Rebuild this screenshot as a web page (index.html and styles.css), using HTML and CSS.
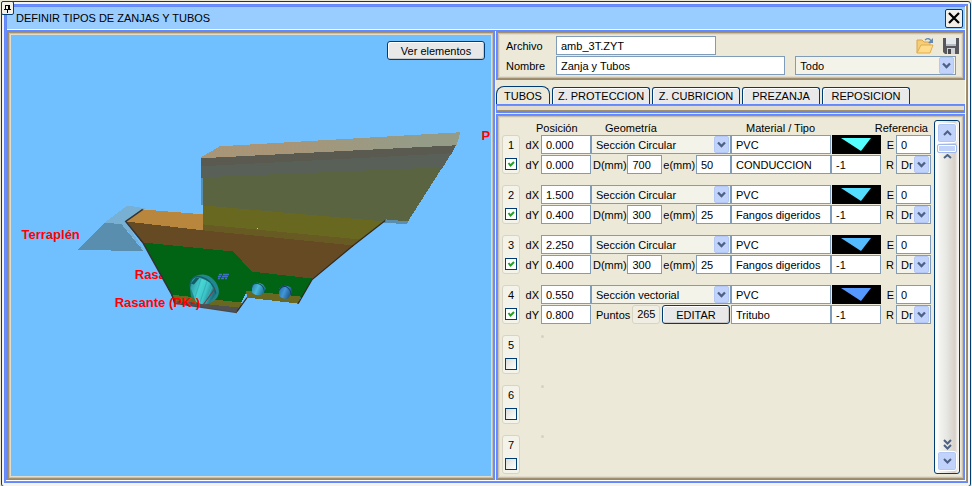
FILE: index.html
```
<!DOCTYPE html>
<html lang="es">
<head>
<meta charset="utf-8">
<title>Definir tipos de zanjas y tubos</title>
<link rel="stylesheet" href="styles.css">
</head>
<body>
<main class="window">
  <button class="pin" type="button" aria-label="Fijar">
    <svg viewBox="0 0 9 11" width="9" height="11" shape-rendering="crispEdges"><path d="M2 2h5v1H2zM2 2h1v4H2zM5 2h2v4H5zM1 6h7v1H1zM4 7h1v3H4z" fill="#000"/></svg>
  </button>
  <div class="frame">
    <header class="titlebar">
      <h1>DEFINIR TIPOS DE ZANJAS Y TUBOS</h1>
      <button class="close" type="button" aria-label="Cerrar">
        <svg viewBox="0 0 12 12" width="12" height="12"><path d="M1 1l10 10M11 1L1 11" stroke="#000" stroke-width="2.2"/></svg>
      </button>
    </header>
    <div class="body">
      <section class="panel viewer">
        <svg class="scene" viewBox="11 35 480 440" preserveAspectRatio="xMidYMid slice" role="img" aria-label="Vista de la zanja">
          <defs>
            <pattern id="weave" width="4" height="3" patternUnits="userSpaceOnUse"><rect width="4" height="3" fill="#a0977e"/><path d="M0 0h1v1H0zM1 1h1v1H1zM2 2h1v1H2z" fill="#bb9268"/></pattern>
            <linearGradient id="fade"><stop offset=".3" stop-color="#949c88" stop-opacity="0"/><stop offset=".85" stop-color="#949c88"/></linearGradient>
            <linearGradient id="pipe" x1="0" y1="0" x2="1" y2=".4"><stop offset="0" stop-color="#238b94"/><stop offset=".45" stop-color="#48d4d4"/><stop offset=".7" stop-color="#3cc4c8"/><stop offset="1" stop-color="#1d7480"/></linearGradient>
            <linearGradient id="pipe2" x1="0" y1="0" x2="1" y2=".4"><stop offset="0" stop-color="#267f9c"/><stop offset=".5" stop-color="#48b8dc"/><stop offset="1" stop-color="#1f6f90"/></linearGradient>
            <linearGradient id="pipe3" x1="0" y1="0" x2="1" y2=".4"><stop offset="0" stop-color="#24689c"/><stop offset=".5" stop-color="#4296d8"/><stop offset="1" stop-color="#1d5688"/></linearGradient>
          </defs>
          <g class="label"><text x="22" y="239">Terraplén</text><text x="135" y="278">Rasante</text><text x="481" y="140">P</text></g>
          <g shape-rendering="crispEdges">
            <path d="M105 222L128 205L145 208L126 221L144 250L122 224Z" fill="#78b0d4"/>
            <path d="M105 222L122 224L144 251L78 249Z" fill="#5a8eae"/>
            <path d="M143 209L204 214L204 232L126 221Z" fill="#b8863c"/>
            <path d="M201 158H204V205H201Z" fill="#5a8eae"/>
            <path d="M201 157L456 144L451 154L201 167Z" fill="#5a5a50"/>
            <path d="M201 157L220 146L460 132L456 145L201 158Z" fill="url(#weave)"/>
            <path d="M201 157L220 146L460 132L456 145L201 158Z" fill="url(#fade)"/>
            <path d="M201 166L451 153L442 168L203 178L201 177Z" fill="#586058"/>
            <path d="M203 177L442 167L407 222L383 222L203 206Z" fill="#5a6440"/>
            <path d="M386 219L408 221L406 224L383 222Z" fill="#5a8eae"/>
            <path d="M203 205L384 221L360 240L203 225Z" fill="#686820"/>
            <path d="M203 224L360 239L352 247L203 231Z" fill="#675a22"/>
            <path d="M126 221L204 230L353 245L312 279L252 273L233 253L143 243Z" fill="#664a24"/>
            <path d="M143 242L233 251L252 271L312 278L302 297L246 292L241 303L172 295Z" fill="#006414"/>
            <path d="M246 290L301 296L298 303L247 297ZM171 294L242 302L239 308L174 301Z" fill="#686820"/>
            <path d="M174 300L239 307L237 312L175 303Z" fill="#505050"/>
            <rect x="257" y="228" width="1" height="1" fill="#ffc040"/>
          </g>
          <path d="M143 209L126 221L143 242L172 294L175 303" fill="none" stroke="#333" stroke-width="1.5"/>
          <path d="M385 220L353 245L312 279L298 303M247 297L237 311" fill="none" stroke="#302a20" stroke-width="1.2"/>
          <path d="M175 303L237 312" fill="none" stroke="#484848"/>
          <path d="M190 286C190 278 195 274 203 274C211 274 219 283 219 291C219 299 211 304 203 303L191 296Z" fill="#208890"/>
          <path d="M192 279L196 276L212 282L216 294L209 303Q202 305 196 301L191 288Z" fill="url(#pipe)"/>
          <path d="M201 278L195 297M207 281L200 302M212 286L206 302" stroke="#35b0b6" fill="none"/>
          <path d="M190 286C190 278 195 275 200 276Q213 279 216 293" fill="none" stroke="#13606a" stroke-width="1.3"/>
          <path d="M191 283L196 277L200 277L194 284Z" fill="#145c64"/>
          <path d="M215 288L202 306" stroke="#704050"/>
          <path d="M252 285Q256 280 263 284L266 288L262 294Q256 296 252 292Z" fill="url(#pipe2)"/>
          <path d="M252 287Q252 282 258 283Q264 285 264 290" fill="none" stroke="#174f64"/>
          <path d="M279 288Q284 283 291 287L292 292L288 298Q282 299 279 295Z" fill="url(#pipe3)"/>
          <path d="M279 290Q281 285 286 286Q291 289 291 294" fill="none" stroke="#173d68"/>
          <path d="M219 274h3M223 274h3M226 274h3M218 276h3M222 276h3M225 276h3M218 278h2M221 278h3M225 278h2" stroke="#4272c8" stroke-width="1.5"/>
          <g class="label"><text x="115" y="306">Rasante (PK-)</text></g>
        </svg>
        <button class="btn see" type="button">Ver elementos</button>
      </section>
      <div class="side">
        <section class="panel file">
          <div class="file-row">
            <label for="archivo">Archivo</label>
            <input id="archivo" class="archivo" value="amb_3T.ZYT">
            <div class="tools">
              <button class="tool" type="button" aria-label="Abrir"><svg viewBox="0 0 18 18" width="18" height="18"><path d="M1 16V3h5l2 2h6v4" fill="#f5cd78" stroke="#d9a549"/><path d="M1 16L5 8h12l-3 8z" fill="#ffdc8c" stroke="#e0ac50"/><path d="M9 3q4-3 6 1" fill="none" stroke="#6488b0" stroke-width="1.3"/><path d="M17 1v5h-5z" fill="#6488b0"/></svg></button>
              <button class="tool" type="button" aria-label="Guardar"><svg viewBox="0 0 18 18" width="18" height="18"><path d="M1 1h16v16H3l-2-2z" fill="#58585c"/><path d="M4 1h10v8H4z" fill="#e4e8ea"/><path d="M4 7h10v2H4z" fill="#b8bcc0"/><path d="M5 11h8v6H5z" fill="#d0d4d6"/><path d="M6 12h3v5H6z" fill="#48484c"/></svg></button>
            </div>
          </div>
          <div class="file-row">
            <label for="nombre">Nombre</label>
            <input id="nombre" class="nombre" value="Zanja y Tubos">
            <select class="todo" aria-label="Filtro"><option>Todo</option></select>
          </div>
        </section>
        <nav class="tabs">
          <button class="tab active" type="button">TUBOS</button>
          <button class="tab wide" type="button">Z. PROTECCION</button>
          <button class="tab mid" type="button">Z. CUBRICION</button>
          <button class="tab" type="button">PREZANJA</button>
          <button class="tab mid" type="button">REPOSICION</button>
        </nav>
        <div class="strip"></div>
        <section class="panel tubes">
          <div class="list">
            <div class="row head"><span class="h-pos">Posición</span><span class="h-geo">Geometría</span><span class="h-mat">Material / Tipo</span><span class="h-ref">Referencia</span></div>

            <div class="row">
              <div class="num"><label for="t1">1</label><input id="t1" type="checkbox" checked></div>
              <label class="axis" for="x1">dX</label><input id="x1" class="px" value="0.000">
              <select class="sec" aria-label="Sección 1"><option>Sección Circular</option></select>
              <input class="mat" aria-label="Material 1" value="PVC">
              <button class="color" type="button" aria-label="Color 1"><svg viewBox="0 0 49 19"><path d="M9 3H39L29 16Z" fill="#55ffff"/></svg></button>
              <label class="ref" for="e1">E</label><input id="e1" class="re" value="0">
              <label class="axis" for="y1">dY</label><input id="y1" class="px" value="0.000">
              <div class="geo"><label for="d1">D(mm)</label><input id="d1" value="700"><label for="w1">e(mm)</label><input id="w1" value="50"></div>
              <input class="mat" aria-label="Tipo 1" value="CONDUCCION"><input class="id" aria-label="Índice 1" value="-1">
              <label class="ref" for="r1">R</label><select id="r1" class="re"><option>Dr</option></select>
            </div>

            <div class="row">
              <div class="num"><label for="t2">2</label><input id="t2" type="checkbox" checked></div>
              <label class="axis" for="x2">dX</label><input id="x2" class="px" value="1.500">
              <select class="sec" aria-label="Sección 2"><option>Sección Circular</option></select>
              <input class="mat" aria-label="Material 2" value="PVC">
              <button class="color" type="button" aria-label="Color 2"><svg viewBox="0 0 49 19"><path d="M9 3H39L29 16Z" fill="#55ddff"/></svg></button>
              <label class="ref" for="e2">E</label><input id="e2" class="re" value="0">
              <label class="axis" for="y2">dY</label><input id="y2" class="px" value="0.400">
              <div class="geo"><label for="d2">D(mm)</label><input id="d2" value="300"><label for="w2">e(mm)</label><input id="w2" value="25"></div>
              <input class="mat" aria-label="Tipo 2" value="Fangos digeridos"><input class="id" aria-label="Índice 2" value="-1">
              <label class="ref" for="r2">R</label><select id="r2" class="re"><option>Dr</option></select>
            </div>

            <div class="row">
              <div class="num"><label for="t3">3</label><input id="t3" type="checkbox" checked></div>
              <label class="axis" for="x3">dX</label><input id="x3" class="px" value="2.250">
              <select class="sec" aria-label="Sección 3"><option>Sección Circular</option></select>
              <input class="mat" aria-label="Material 3" value="PVC">
              <button class="color" type="button" aria-label="Color 3"><svg viewBox="0 0 49 19"><path d="M9 3H39L29 16Z" fill="#55bbff"/></svg></button>
              <label class="ref" for="e3">E</label><input id="e3" class="re" value="0">
              <label class="axis" for="y3">dY</label><input id="y3" class="px" value="0.400">
              <div class="geo"><label for="d3">D(mm)</label><input id="d3" value="300"><label for="w3">e(mm)</label><input id="w3" value="25"></div>
              <input class="mat" aria-label="Tipo 3" value="Fangos digeridos"><input class="id" aria-label="Índice 3" value="-1">
              <label class="ref" for="r3">R</label><select id="r3" class="re"><option>Dr</option></select>
            </div>

            <div class="row">
              <div class="num"><label for="t4">4</label><input id="t4" type="checkbox" checked></div>
              <label class="axis" for="x4">dX</label><input id="x4" class="px" value="0.550">
              <select class="sec" aria-label="Sección 4"><option>Sección vectorial</option></select>
              <input class="mat" aria-label="Material 4" value="PVC">
              <button class="color" type="button" aria-label="Color 4"><svg viewBox="0 0 49 19"><path d="M9 3H39L29 16Z" fill="#5599ff"/></svg></button>
              <label class="ref" for="e4">E</label><input id="e4" class="re" value="0">
              <label class="axis" for="y4">dY</label><input id="y4" class="px" value="0.800">
              <div class="geo vector"><span>Puntos</span><output>265</output><button class="btn" type="button">EDITAR</button></div>
              <input class="mat" aria-label="Tipo 4" value="Tritubo"><input class="id" aria-label="Índice 4" value="-1">
              <label class="ref" for="r4">R</label><select id="r4" class="re"><option>Dr</option></select>
            </div>

            <div class="row"><div class="num"><label for="t5">5</label><input id="t5" type="checkbox"></div><i class="dot"></i></div>
            <div class="row"><div class="num"><label for="t6">6</label><input id="t6" type="checkbox"></div><i class="dot"></i></div>
            <div class="row"><div class="num"><label for="t7">7</label><input id="t7" type="checkbox"></div><i class="dot"></i></div>
          </div>
          <div class="scroll">
            <button class="arrow" type="button" aria-label="Subir"><svg viewBox="0 0 9 6" width="9" height="6"><path d="M1 5l3.500-3.500L8 5" class="chev"/></svg></button>
            <div class="thumb"></div>
            <svg viewBox="0 0 9 5" width="9" height="5"><path d="M1 4l3.500-3L8 4" class="chev"/></svg>
            <svg class="end" viewBox="0 0 9 11" width="9" height="11"><path d="M1 1l3.500 3.500L8 1M1 6l3.500 3.500L8 6" class="chev"/></svg>
            <button class="arrow" type="button" aria-label="Bajar"><svg viewBox="0 0 9 6" width="9" height="6"><path d="M1 1l3.500 3.500L8 1" class="chev"/></svg></button>
          </div>
        </section>
      </div>
    </div>
  </div>
</main>
</body>
</html>
```
FILE: styles.css
```
* { box-sizing: border-box; }

:root {
  --navy: #003c74;
  --blue: #6488f8;
  --brown: #a09070;
  --face: #ece9d8;
  --field: #7f9db9;
  --light: #f4f3ea;
}

body {
  margin: 0;
  padding: 1px 1px 0;
  background: var(--face);
  color: #000;
  font: 11px/14px "Liberation Sans", Arial, sans-serif;
}

button, input, select {
  font: inherit;
  color: inherit;
  margin: 0;
  padding: 0;
  min-width: 0;
  border-radius: 0;
}

.window {
  position: relative;
  display: flex;
  min-height: calc(100vh - 1px);
  padding: 2px 2px 3px;
  border: 1px solid var(--navy);
  border-radius: 3px;
  background: #f6f4ec;
}

.pin {
  position: absolute;
  left: -1px;
  top: -1px;
  width: 13px;
  height: 14px;
  border: 1px solid var(--navy);
  border-radius: 2px;
  background: #f3f1e8;
  display: grid;
  place-items: center;
}

.frame {
  flex: 1;
  display: flex;
  flex-direction: column;
  padding: 3px;
  background: var(--face);
  box-shadow: inset 0 0 0 1px var(--blue), inset 0 0 0 2px var(--brown), inset -3px -3px #fff, inset 3px 3px var(--blue);
}

.titlebar {
  display: flex;
  align-items: center;
  justify-content: space-between;
  height: 23px;
  padding: 0 2px 0 9px;
  border-bottom: 1px solid #fff;
  background: #99ccff;
}

h1 {
  margin: 0;
  font-size: 11px;
  font-weight: normal;
}

.close {
  width: 18px;
  height: 19px;
  border: 1px solid var(--navy);
  border-radius: 2px;
  background: #f2f0e8;
  display: grid;
  place-items: center;
}

.body {
  flex: 1;
  display: grid;
  grid-template-columns: minmax(0, 488fr) minmax(0, 469fr);
  gap: 1px;
  padding-top: 1px;
  background: linear-gradient(var(--blue) 1px, #f6f4ec 1px);
}

.panel {
  padding: 4px;
  background: var(--face);
  box-shadow: inset 0 0 0 1px var(--blue), inset 0 0 0 2px var(--brown), inset 0 0 0 3px #c8c0ac, inset 0 0 0 4px #e2dccd;
}

.viewer {
  position: relative;
  display: flex;
}

.scene {
  flex: 1;
  width: 100%;
  min-height: 300px;
  height: 100%;
  background: #70c0ff;
}

.label {
  font: bold 13px "Liberation Sans", Arial, sans-serif;
  fill: #f00;
}

.btn {
  border: 1px solid var(--navy);
  border-radius: 3px;
  background: #e8e8e8;
  box-shadow: inset 1px 1px #fff, inset -1px -1px #c8c8c8;
}

.see {
  position: absolute;
  top: 10px;
  right: 10px;
  width: 98px;
  height: 19px;
}

.side {
  display: flex;
  flex-direction: column;
  background: var(--face);
}

.file {
  display: grid;
  gap: 1px;
  padding: 5px 9px 5px 10px;
}

.file-row {
  display: flex;
  align-items: center;
  height: 19px;
}

.file-row label { width: 50px; }

input, select, output {
  height: 19px;
  border: 1px solid var(--field);
  background: #fff;
  padding: 0 4px;
}

.archivo { flex: 0 1 160px; }
.nombre { flex: 230 1 0; margin-right: 10px; }
.todo { flex: 158 1 0; }

.tools {
  display: flex;
  gap: 8px;
  margin-left: auto;
  margin-right: -4px;
}

.tool {
  width: 18px;
  height: 18px;
  border: 0;
  background: none;
}

.tool svg { display: block; }

select {
  appearance: none;
  background: url("data:image/svg+xml,%3Csvg xmlns='http://www.w3.org/2000/svg' width='15' height='17'%3E%3Crect x='.5' y='.5' width='14' height='16' rx='1.500' fill='%23c1d3fb' stroke='%23b4c8f6'/%3E%3Cpath d='M4 6.500l3.500 3.500L11 6.500' fill='none' stroke='%234d6185' stroke-width='2.300'/%3E%3C/svg%3E") right 1px center no-repeat var(--light);
}

.tabs {
  display: flex;
  align-items: flex-end;
  gap: 2px;
  height: 24px;
}

.tab {
  width: 78px;
  height: 17px;
  border: 1px solid var(--navy);
  border-bottom: 0;
  border-radius: 3px 3px 0 0;
  background: #e9e9e9;
  box-shadow: inset 1px 1px #fff;
}

.tab.wide { width: 98px; }
.tab.mid { width: 88px; }

.tab.active {
  width: 54px;
  height: 18px;
  border-radius: 8px 8px 0 0;
  background: var(--face);
  box-shadow: none;
}

.strip {
  height: 9px;
  margin-bottom: 1px;
  border: solid var(--blue);
  border-width: 1px 1px 2px;
  background: linear-gradient(var(--brown) 1px, #e2dccd 1px 5px, var(--brown) 5px);
}

.tubes {
  flex: 1;
  display: flex;
  padding: 6px 5px 6px 6px;
}

.list {
  flex: 1;
  display: grid;
  align-content: start;
  row-gap: 11px;
}

.row {
  display: grid;
  grid-template-columns: 18px 21px minmax(0, 50fr) minmax(0, 140fr) minmax(0, 100fr) minmax(0, 50fr) 15px minmax(0, 35fr);
  grid-template-rows: 19px 19px;
  row-gap: 1px;
  align-items: center;
  padding-right: 3px;
}

.list .head {
  grid-template-rows: 15px;
  margin-bottom: -11px;
}

.h-pos { grid-column: 2 / 4; padding-left: 16px; }
.h-geo { padding-left: 14px; }
.h-mat { padding-left: 15px; }
.h-ref { grid-column: 6 / 9; justify-self: end; padding-right: 3px; }

.num {
  grid-row: 1 / 3;
  align-self: stretch;
  display: flex;
  flex-direction: column;
  align-items: center;
  justify-content: space-between;
  padding: 2px 0 3px;
  border: 1px solid #d8d4c4;
  border-radius: 3px;
  background: var(--light);
}

.num input {
  appearance: none;
  width: 12px;
  height: 12px;
  padding: 0;
  border: 1px solid var(--navy);
  background: linear-gradient(135deg, #dcdcd7, #fff);
}

.num input:checked {
  background: url("data:image/svg+xml,%3Csvg xmlns='http://www.w3.org/2000/svg' width='10' height='10'%3E%3Cpath d='M2.500 4L4.500 6.500L8 3' fill='none' stroke='%2321a121' stroke-width='2'/%3E%3C/svg%3E") center no-repeat #fff;
}

.axis, .ref {
  text-align: right;
  padding-right: 2px;
}

.color {
  height: 19px;
  margin-left: 1px;
  border: 0;
  background: #000;
}

.color svg {
  display: block;
  width: 100%;
  height: 19px;
}

.geo {
  display: flex;
  align-items: center;
  justify-content: space-between;
  padding-left: 2px;
}

.geo input { width: 35px; }
.geo.vector { padding: 0 1px 0 5px; }

.geo output {
  width: 28px;
  border-color: #d8d4c4;
  border-radius: 3px;
  background: #f0eee2;
  line-height: 17px;
}

.geo .btn {
  width: 68px;
  height: 19px;
}

.dot {
  grid-column: 3;
  width: 3px;
  height: 3px;
  border-radius: 50%;
  background: #d6d2c2;
  align-self: start;
}

.scroll {
  width: 26px;
  display: flex;
  flex-direction: column;
  align-items: center;
  gap: 1px;
  padding: 2px 0;
  border: 1px solid var(--navy);
  border-radius: 3px;
  background: linear-gradient(90deg, #fff 2px, #f2f2ee 5px, #e6e6e2 12px, #d8d0c8 20px, #f8f6f2 23px);
}

.arrow {
  width: 20px;
  height: 20px;
  border: 1px solid #fff;
  border-radius: 3px;
  background: #c1d3fb;
  box-shadow: inset 0 0 0 1px #b2c8f4;
  display: grid;
  place-items: center;
}

.thumb {
  width: 20px;
  height: 9px;
  border: 1px solid #a0b8e8;
  border-radius: 2px;
  background: #c1d3fb;
  box-shadow: inset 0 0 0 1px #fff;
}

.end { margin-top: auto; }

.chev {
  fill: none;
  stroke: #4d6185;
  stroke-width: 2;
}
```
